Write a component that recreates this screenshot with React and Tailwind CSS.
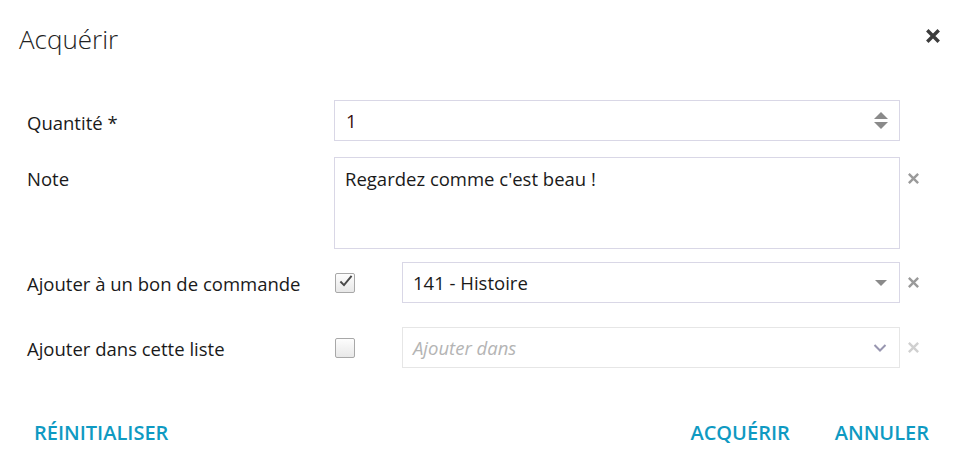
import React, { useState } from 'react';

const font = { fontFamily: '"Open Sans", "Noto Sans", sans-serif' };

const CloseIcon = ({ className, weight = 2.6 }) => (
  <svg viewBox="0 0 14 14" className={className}>
    <path d="M2 2 L12 12 M12 2 L2 12" stroke="currentColor" strokeWidth={weight} strokeLinecap="butt" />
  </svg>
);

const Checkbox = ({ checked, onChange }) => (
  <button
    type="button"
    onClick={onChange}
    className="w-[20px] h-[20px] rounded-[2px] border border-[#a8a8a8] bg-gradient-to-b from-[#fdfdfd] to-[#e8e8e8] flex items-center justify-center"
  >
    {checked && (
      <svg viewBox="0 0 20 20" className="w-[19px] h-[19px] -mt-[3px] ml-[2px]">
        <path d="M3 10 L7.5 14.5 L17 3" fill="none" stroke="#4a4a4a" strokeWidth="2.4" />
      </svg>
    )}
  </button>
);

const App = () => {
  const [qty, setQty] = useState(1);
  const [note, setNote] = useState("Regardez comme c'est beau !");
  const [order, setOrder] = useState(true);
  const [list, setList] = useState(false);

  return (
    <div className="w-[961px] h-[471px] bg-white text-[#1a1a1a] relative" style={font}>
      <div className="flex items-start justify-between pl-[19px] pr-[20px] pt-[20px]">
        <h1 className="text-[26px] font-light leading-[38px] text-[#222]">Acquérir</h1>
        <button className="mt-[8px] text-[#3c3c3c]">
          <CloseIcon className="w-[16px] h-[16px]" weight={3} />
        </button>
      </div>

      <div className="pl-[27px] mt-[42px]">
        {/* Quantité */}
        <div className="flex items-center">
          <label className="w-[307px] text-[18.5px] pt-[4px]">Quantité *</label>
          <div className="w-[566px] h-[41px] border border-[#d9d7e6] flex items-center pl-[11px] pr-[11px]">
            <span className="flex-1 text-[18.5px] text-[#3a1010]">{qty}</span>
            <div className="flex flex-col items-center gap-[3px]">
              <button onClick={() => setQty(qty + 1)} className="w-0 h-0 border-l-[7px] border-r-[7px] border-b-[7px] border-l-transparent border-r-transparent border-b-[#8a8a8a]" />
              <button onClick={() => setQty(Math.max(1, qty - 1))} className="w-0 h-0 border-l-[7px] border-r-[7px] border-t-[7px] border-l-transparent border-r-transparent border-t-[#8a8a8a]" />
            </div>
          </div>
        </div>

        {/* Note */}
        <div className="flex items-start mt-[16px]">
          <label className="w-[307px] text-[18.5px] pt-[8px]">Note</label>
          <textarea
            value={note}
            onChange={(e) => setNote(e.target.value)}
            className="w-[566px] h-[92px] border border-[#d9d7e6] px-[10px] pt-[7px] text-[18.5px] resize-none outline-none"
          />
          <button className="ml-[7px] mt-[15px] text-[#9a9a9a]">
            <CloseIcon className="w-[13px] h-[13px]" />
          </button>
        </div>

        {/* Bon de commande */}
        <div className="flex items-center mt-[13px]">
          <label className="w-[307px] text-[18.5px] pt-[3px]">Ajouter à un bon de commande</label>
          <div className="w-[68px] pl-[1px]">
            <Checkbox checked={order} onChange={() => setOrder(!order)} />
          </div>
          <div className="w-[498px] h-[41px] border border-[#d9d7e6] flex items-center pl-[10px] pr-[12px]">
            <span className="flex-1 text-[18.5px]">141 - Histoire</span>
            <span className="w-0 h-0 border-l-[6px] border-r-[6px] border-t-[6px] border-l-transparent border-r-transparent border-t-[#8a8a8a]" />
          </div>
          <button className="ml-[7px] text-[#9a9a9a]">
            <CloseIcon className="w-[13px] h-[13px]" />
          </button>
        </div>

        {/* Liste */}
        <div className="flex items-center mt-[24px]">
          <label className="w-[307px] text-[18.5px] pt-[3px]">Ajouter dans cette liste</label>
          <div className="w-[68px] pl-[1px]">
            <Checkbox checked={list} onChange={() => setList(!list)} />
          </div>
          <div className="w-[498px] h-[41px] border border-[#e6e6e6] flex items-center pl-[10px] pr-[12px]">
            <span className="flex-1 text-[18.5px] italic text-[#b4b4b4]">Ajouter dans</span>
            <svg viewBox="0 0 14 10" className="w-[14px] h-[10px]">
              <path d="M1.5 2 L7 7.5 L12.5 2" fill="none" stroke="#9896b0" strokeWidth="2" />
            </svg>
          </div>
          <button className="ml-[7px] text-[#d0d0d0]">
            <CloseIcon className="w-[13px] h-[13px]" />
          </button>
        </div>
      </div>

      <div className="flex items-center justify-between pl-[34px] pr-[32px] mt-[50px]">
        <button className="text-[20px] font-semibold text-[#0f9ac2]">RÉINITIALISER</button>
        <div className="flex items-center gap-[45px]">
          <button className="text-[20px] font-semibold text-[#0f9ac2]">ACQUÉRIR</button>
          <button className="text-[20px] font-semibold text-[#0f9ac2]">ANNULER</button>
        </div>
      </div>
    </div>
  );
};

export default App;
